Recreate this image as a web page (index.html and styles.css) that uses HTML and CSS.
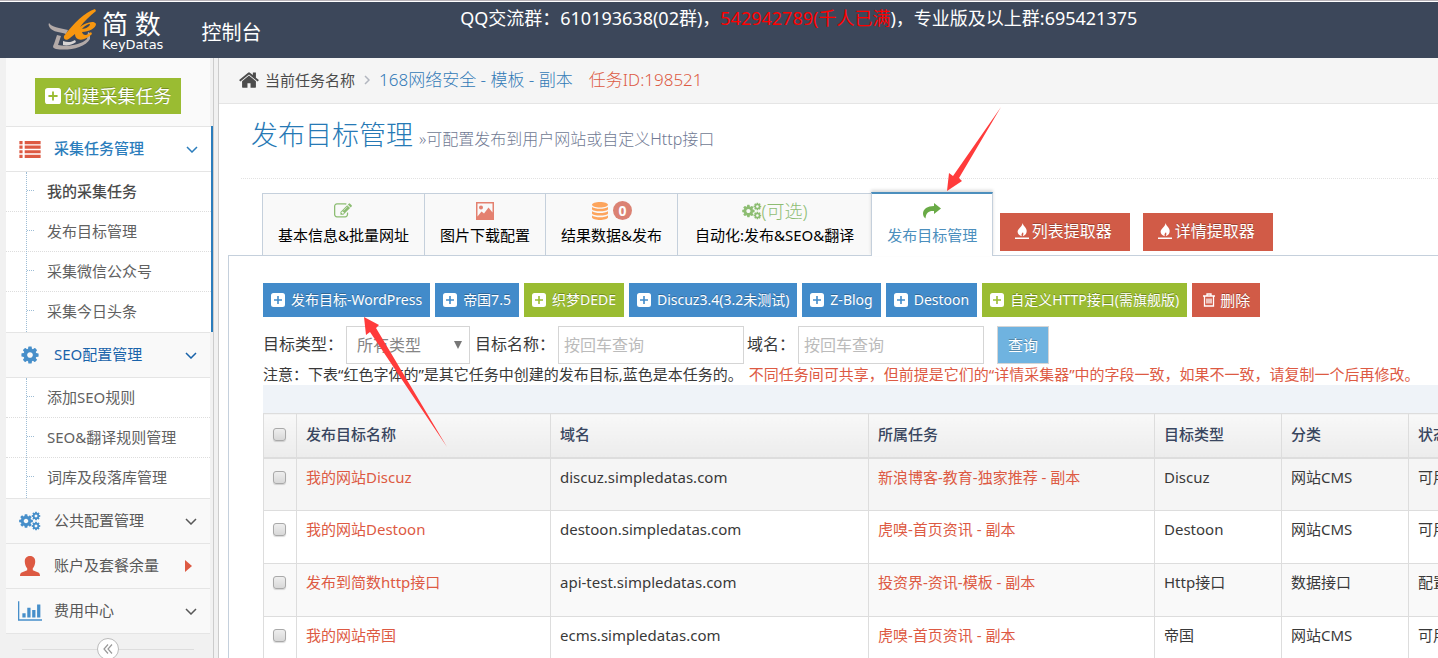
FILE: index.html
```html
<!DOCTYPE html>
<html lang="zh-CN">
<head>
<meta charset="utf-8">
<title>发布目标管理 - 简数控制台</title>
<link rel="stylesheet" href="styles.css">
</head>
<body>
<svg class="sprite" aria-hidden="true">
  <symbol id="cog" viewBox="0 0 1792 1792"><path d="M1152 896q0-106-75-181t-181-75-181 75-75 181 75 181 181 75 181-75 75-181zm512-109v222q0 12-8 23t-20 13l-185 28q-19 54-39 91 35 50 107 138 10 12 10 25t-9 23q-27 37-99 108t-94 71q-12 0-26-9l-138-108q-44 23-91 38-16 136-29 186-7 28-36 28h-222q-14 0-24.500-8.500t-11.500-21.500l-28-184q-49-16-90-37l-141 107q-10 9-25 9-14 0-25-11-126-114-165-168-7-10-7-23 0-12 8-23 15-21 51-66.500t54-70.500q-27-50-41-99l-183-27q-13-2-21-12.500t-8-23.500v-222q0-12 8-23t19-13l186-28q14-46 39-92-40-57-107-138-10-12-10-24 0-10 9-23 26-36 98.500-107.500t94.500-71.500q13 0 26 10l138 107q44-23 91-38 16-136 29-186 7-28 36-28h222q14 0 24.500 8.500t11.500 21.500l28 184q49 16 90 37l142-107q9-9 24-9 13 0 25 10 129 119 165 170 7 8 7 22 0 12-8 23-15 21-51 66.500t-54 70.500q26 50 41 98l183 28q13 2 21 12.500t8 23.500z"/></symbol>
  <symbol id="cogs" viewBox="0 0 22 20"><use href="#cog" x="-1" y="2" width="16" height="16"/><use href="#cog" x="12" y="0" width="10" height="10"/><use href="#cog" x="12" y="10" width="10" height="10"/></symbol>
  <symbol id="plus" viewBox="0 0 14 14"><path fill-rule="evenodd" d="M2.500 0h9A2.500 2.500 0 0 1 14 2.500v9a2.500 2.500 0 0 1-2.500 2.500h-9A2.500 2.500 0 0 1 0 11.500v-9A2.500 2.500 0 0 1 2.500 0zM6.200 3V6.200H3v1.600H6.200V11h1.600V7.800H11V6.200H7.800V3z"/></symbol>
  <symbol id="down" viewBox="0 0 12 7"><path d="M1 1l5 5 5-5" fill="none" stroke="currentColor" stroke-width="1.500"/></symbol>
  <symbol id="fire" viewBox="0 0 14 16"><path d="M7.500 0c.6 3 4.200 4.400 4.200 8 0 2.700-1.800 4.700-4 5.200.9-1.600.8-2.600.3-3.900-.6.900-1.400 1.300-1.500 2.300 0 .6.100 1.100.3 1.600C4.300 12.600 2.600 11 2.600 8.800 2.600 5.600 7.200 4.200 7.500 0z"/><path d="M0 14.500h14V16H0z"/></symbol>
</svg>

<div class="app">
  <header class="topbar">
    <a class="logo" href="#" aria-label="简数 KeyDatas">
      <svg class="logo-mark" viewBox="0 0 48 42" aria-hidden="true">
        <path d="M1 14c2 3 6 4 10 5l9 2-2 4c-6-2-13-2-16-6-1-2-2-3-1-5z" fill="#b3aaa8"/>
        <path d="M9 26l4 1-3 9c9 2 23 0 29-6l1-7 2 1v6c-5 9-22 12-34 10-4-1-3-3-2-5z" fill="#b3aaa8"/>
        <path d="M15 32c5 2 9 1 12-1l1 2c-4 3-9 4-13 3z" fill="#d8d4d4"/>
        <path d="M47 0C37 3 26 14 16 27c-1 4 3 5 6 2l5-4c0 7 9 8 17 0l-1-2c-4 4-8 4-9 0 7 0 14-4 14-8-2-4-11-1-16 3C36 12 42 7 48 2zM42 15c0 2-4 5-8 5 2-3 6-5 8-5z" fill="#f7960f"/>
      </svg>
      <span class="logo-text"><span class="logo-cn">简 数</span><span class="logo-en">KeyDatas</span></span>
    </a>
    <a class="console" href="#">控制台</a>
    <p class="notice">QQ交流群：610193638(02群)，<span class="full">542942789(千人已满</span>)，专业版及以上群:695421375</p>
  </header>

  <div class="body">
    <aside class="sidebar">
      <div class="create"><button type="button" class="btn-create"><svg><use href="#plus"/></svg>创建采集任务</button></div>
      <nav>
        <section class="open">
          <a class="item" href="#"><svg class="ico red" viewBox="0 0 20 16"><path d="M0 0h3v3H0zM5 0h15v3H5zM0 4.300h3v3H0zM5 4.300h15v3H5zM0 8.600h3v3H0zM5 8.600h15v3H5zM0 13h3v3H0zM5 13h15v3H5z"/></svg><span>采集任务管理</span><svg class="caret"><use href="#down"/></svg></a>
          <ul>
            <li><a class="current" href="#">我的采集任务</a></li>
            <li><a href="#">发布目标管理</a></li>
            <li><a href="#">采集微信公众号</a></li>
            <li><a href="#">采集今日头条</a></li>
          </ul>
        </section>
        <section>
          <a class="item link" href="#"><svg class="ico blue"><use href="#cog"/></svg><span>SEO配置管理</span><svg class="caret"><use href="#down"/></svg></a>
          <ul>
            <li><a href="#">添加SEO规则</a></li>
            <li><a href="#">SEO&amp;翻译规则管理</a></li>
            <li><a href="#">词库及段落库管理</a></li>
          </ul>
        </section>
        <section><a class="item" href="#"><svg class="ico blue"><use href="#cogs"/></svg><span>公共配置管理</span><svg class="caret"><use href="#down"/></svg></a></section>
        <section><a class="item" href="#"><svg class="ico red" viewBox="0 0 20 20"><path d="M10 0c3.500 0 5.500 2.500 5.200 6-.2 3-1.200 5-2.400 6.200v2l5.500 2.300C19.600 17 20 18.500 20 20H0c0-1.500.4-3 1.700-3.500l5.500-2.300v-2C6 11 5 9 4.800 6 4.500 2.500 6.500 0 10 0z"/></svg><span>账户及套餐余量</span><svg class="caret red" viewBox="0 0 12 12"><path d="M0 0v12l7-6z"/></svg></a></section>
        <section><a class="item" href="#"><svg class="ico blue" viewBox="0 0 22 18"><path d="M0 0h1.200v16.500H22V18H0zM4 11h3v4H4zM8.500 6h3v9h-3zM13 8h3v7h-3zM17.500 3h3v12h-3z"/></svg><span>费用中心</span><svg class="caret"><use href="#down"/></svg></a></section>
      </nav>
      <div class="collapse"><button type="button" aria-label="收起菜单"><svg viewBox="0 0 10 10"><path d="M5 .5L1 5l4 4.500M9 .5L5 5l4 4.500" fill="none" stroke="#999" stroke-width="1.200"/></svg></button></div>
    </aside>

    <main class="main">
      <div class="crumbs">
        <svg class="home" viewBox="64 160 1664 1376"><path d="M1472 992v480q0 26-19 45t-45 19h-384v-384h-256v384h-384q-26 0-45-19t-19-45v-480q0-1 .5-3t.5-3l575-474 575 474q1 2 1 6zm223-69l-62 74q-8 9-21 11h-3q-13 0-21-7l-692-577-692 577q-12 8-24 7-13-2-21-11l-62-74q-8-10-7-23.500t11-21.500l719-599q32-26 76-26t76 26l244 204v-195q0-14 9-23t23-9h192q14 0 23 9t9 23v408l219 182q10 8 11 21.500t-7 23.500z"/></svg>
        <span>当前任务名称</span>
        <svg class="sep" viewBox="0 0 6 10"><path d="M1 1l4 4-4 4" fill="none" stroke="#b2b6bf" stroke-width="1.500"/></svg>
        <a class="task" href="#">168网络安全 - 模板 - 副本</a>
        <span class="task-id">任务ID:198521</span>
      </div>

      <div class="heading"><h1>发布目标管理</h1><small>»可配置发布到用户网站或自定义Http接口</small></div>

      <div class="tabs">
        <a class="tab" href="#"><span class="tab-icon"><svg class="green-ico" viewBox="0 128 1792 1536"><path d="M888 1184l116-116-152-152-116 116v56h96v96h56zm440-720q-16-16-33 1l-350 350q-17 17-1 33t33-1l350-350q17-17 1-33zm80 594v190q0 119-84.500 203.500t-203.500 84.500h-832q-119 0-203.500-84.500t-84.500-203.500v-832q0-119 84.500-203.500t203.500-84.500h832q63 0 117 25 15 7 18 23 3 17-9 29l-49 49q-14 14-32 8-23-6-45-6h-832q-66 0-113 47t-47 113v832q0 66 47 113t113 47h832q66 0 113-47t47-113v-126q0-13 9-22l64-64q15-15 35-7t20 29zm-96-738l288 288-672 672h-288v-288zm444 132l-92 92-288-288 92-92q28-28 68-28t68 28l152 152q28 28 28 68t-28 68z"/></svg></span>基本信息&amp;批量网址</a>
        <a class="tab" href="#"><span class="tab-icon"><svg class="red" viewBox="0 0 18 18"><path fill-rule="evenodd" d="M0 0h18v18H0zM1.500 1.500v13l4-5 2.500 2 4.500-6 4 5v-9zM5 3.500a2 2 0 1 1 0 4 2 2 0 0 1 0-4z"/></svg></span>图片下载配置</a>
        <a class="tab" href="#"><span class="tab-icon"><svg class="orange" viewBox="0 0 16 18"><path d="M8 0c4.400 0 8 1.200 8 2.700S12.400 5.400 8 5.400 0 4.200 0 2.700 3.600 0 8 0zM0 5c3 2.400 13 2.400 16 0v2.200C15 10 1 10 0 7.200zM0 9.300c3 2.400 13 2.400 16 0v2.200c-1 2.800-15 2.800-16 0zM0 13.500c3 2.400 13 2.400 16 0v2C15 18.800 1 18.800 0 15.500z"/></svg><b class="badge">0</b></span>结果数据&amp;发布</a>
        <a class="tab wide" href="#"><span class="tab-icon optional"><svg><use href="#cogs"/></svg>(可选)</span>自动化:发布&amp;SEO&amp;翻译</a>
        <a class="tab active" href="#"><span class="tab-icon"><svg class="green-ico" viewBox="0 0 18 16"><path d="M11 0l7 5.500-7 5.500V8C6 7.500 3 9.500 2.500 15.500 1 14.500 0 12.500 0 10.500 0 6 4.500 3 11 3z"/></svg></span>发布目标管理</a>
        <button type="button" class="extract"><svg><use href="#fire"/></svg>列表提取器</button>
        <button type="button" class="extract"><svg><use href="#fire"/></svg>详情提取器</button>
      </div>

      <div class="panel">
        <div class="toolbar">
          <button type="button"><svg><use href="#plus"/></svg>发布目标-WordPress</button>
          <button type="button"><svg><use href="#plus"/></svg>帝国7.5</button>
          <button type="button" class="green"><svg><use href="#plus"/></svg>织梦DEDE</button>
          <button type="button"><svg><use href="#plus"/></svg>Discuz3.4(3.2未测试)</button>
          <button type="button"><svg><use href="#plus"/></svg>Z-Blog</button>
          <button type="button"><svg><use href="#plus"/></svg>Destoon</button>
          <button type="button" class="green"><svg><use href="#plus"/></svg>自定义HTTP接口(需旗舰版)</button>
          <button type="button" class="danger"><svg viewBox="0 0 12 14"><path d="M0 3h12M4 3V1h4v2M1.500 3v10h9V3M4 5.500v5M6 5.500v5M8 5.500v5" fill="none" stroke="#fff" stroke-width="1.300"/></svg>删除</button>
        </div>

        <form class="filters">
          <label for="type">目标类型：</label>
          <span class="select"><select id="type"><option>所有类型</option></select></span>
          <label for="name">目标名称：</label>
          <input id="name" type="text" placeholder="按回车查询">
          <label for="domain">域名：</label>
          <input id="domain" type="text" placeholder="按回车查询">
          <button type="button" class="query">查询</button>
        </form>
        <p class="note">注意：下表“红色字体的”是其它任务中创建的发布目标,蓝色是本任务的。<span>不同任务间可共享，但前提是它们的“详情采集器”中的字段一致，如果不一致，请复制一个后再修改。</span></p>

        <div class="grid">
          <table>
            <colgroup><col class="c-check"><col class="c-name"><col class="c-domain"><col class="c-task"><col class="c-kind"><col class="c-kind"><col class="c-kind"></colgroup>
            <thead><tr><th><input type="checkbox" aria-label="全选"></th><th>发布目标名称</th><th>域名</th><th>所属任务</th><th>目标类型</th><th>分类</th><th>状态</th></tr></thead>
            <tbody>
              <tr class="hover"><td><input type="checkbox" aria-label="选择 我的网站Discuz"></td><td><a href="#">我的网站Discuz</a></td><td>discuz.simpledatas.com</td><td><a href="#">新浪博客-教育-独家推荐 - 副本</a></td><td>Discuz</td><td>网站CMS</td><td>可用</td></tr>
              <tr><td><input type="checkbox" aria-label="选择 我的网站Destoon"></td><td><a href="#">我的网站Destoon</a></td><td>destoon.simpledatas.com</td><td><a href="#">虎嗅-首页资讯 - 副本</a></td><td>Destoon</td><td>网站CMS</td><td>可用</td></tr>
              <tr class="odd"><td><input type="checkbox" aria-label="选择 发布到简数http接口"></td><td><a href="#">发布到简数http接口</a></td><td>api-test.simpledatas.com</td><td><a href="#">投资界-资讯-模板 - 副本</a></td><td>Http接口</td><td>数据接口</td><td>配置</td></tr>
              <tr><td><input type="checkbox" aria-label="选择 我的网站帝国"></td><td><a href="#">我的网站帝国</a></td><td>ecms.simpledatas.com</td><td><a href="#">虎嗅-首页资讯 - 副本</a></td><td>帝国</td><td>网站CMS</td><td>可用</td></tr>
            </tbody>
          </table>
        </div>
      </div>
    </main>
  </div>

  <svg class="pointer pointer-tab" viewBox="0 0 56 87" aria-hidden="true"><path d="M55 2L13 73l3 3L1 86l2-18 4 3z"/></svg>
  <svg class="pointer pointer-add" viewBox="0 0 84 133" aria-hidden="true"><path d="M0 2l15 8-3 3 71 119L6 17l-4 3z"/></svg>
</div>
</body>
</html>
```
FILE: styles.css
```css
* { box-sizing: border-box; }

body {
  margin: 0;
  font: 15px/22px "Noto Sans", "Noto Sans CJK SC", sans-serif;
  color: #393939;
  background: #fff;
}

a { color: inherit; text-decoration: none; }
button, input, select { font: inherit; margin: 0; border-radius: 0; }
svg { fill: currentColor; flex: none; }
ul { list-style: none; margin: 0; padding: 0; }
.sprite { position: absolute; width: 0; height: 0; }

.app {
  position: relative;
  display: flex;
  flex-direction: column;
  height: 100vh;
  overflow: hidden;
  border-top: 1px solid #b8b3b8;
}

/* Top bar */
.topbar {
  position: relative;
  flex: none;
  display: flex;
  align-items: center;
  height: 57px;
  padding-left: 48px;
  color: #fff;
  background: #3c475a;
  border-top: 1px solid #fff;
}
.logo { display: flex; align-items: center; gap: 6px; }
.logo-mark { width: 48px; height: 42px; }
.logo-text { display: flex; flex-direction: column; }
.logo-cn { font-size: 26px; line-height: 28px; }
.logo-en { font: 13px/13px "DejaVu Sans", sans-serif; }
.console { margin-left: 38px; padding-top: 6px; font-size: 20px; }
.notice {
  position: absolute;
  left: 32%;
  top: 3px;
  margin: 0;
  font-size: 18px;
  line-height: 26px;
  white-space: nowrap;
}
.notice .full { color: #f00; }

.body { flex: 1; display: flex; min-height: 0; }

/* Sidebar */
.sidebar {
  flex: none;
  width: 219px;
  padding-left: 6px;
  background: linear-gradient(90deg, #f1f1f1 213px, #ccc 213px, #ccc 214px, #f1f1f1 214px, #f1f1f1 218px, #ccc 218px);
}
.create {
  display: flex;
  justify-content: center;
  width: 204px;
  height: 68px;
  padding-top: 20px;
  background: #fafafa;
}
.btn-create {
  display: flex;
  align-items: center;
  justify-content: center;
  gap: 3px;
  width: 146px;
  height: 36px;
  padding: 0;
  border: 0;
  color: #fff;
  background: #9abc32;
  font-size: 18px;
  text-shadow: 0 -1px 0 rgba(0, 0, 0, .25);
}
.btn-create svg { width: 16px; height: 16px; }
.sidebar section { width: 204px; }
.sidebar section.open { width: 207px; border-right: 2px solid #2b7dbc; }
.item {
  display: flex;
  align-items: center;
  height: 45px;
  padding: 0 13px 0 12px;
  border-top: 1px solid #e5e5e5;
  background: #f9f9f9;
  color: #585858;
}
.item span { flex: 1; padding: 0 0 2px 12px; }
.item.link { color: #1963aa; }
.open .item { color: #2b7dbc; background: #fff; font-weight: 500; }
.ico { width: 24px; height: 20px; }
.open .ico { height: 17px; }
.red { color: #dd5a43; }
.blue { color: #478fca; }
.orange { color: #ff892a; }
.green-ico { color: #69aa46; }
.caret { width: 12px; height: 7px; }
.caret.red { height: 12px; }
.sidebar ul { position: relative; border-top: 1px solid #e5e5e5; background: #fff; }
.sidebar ul::before {
  content: "";
  position: absolute;
  left: 20px;
  top: 0;
  bottom: 0;
  border-left: 1px dotted #9dbdd6;
}
.sidebar li { height: 40px; border-bottom: 1px dotted #ddd; }
.sidebar li:last-child { border-bottom: 0; }
.sidebar li a { display: flex; align-items: center; gap: 13px; height: 37px; padding-left: 21px; color: #616161; }
.sidebar li a::before { content: ""; width: 7px; border-top: 1px dotted #9dbdd6; }
.sidebar li .current { font-weight: 500; color: #4b4b4b; }
.collapse {
  display: flex;
  justify-content: center;
  width: 204px;
  padding-top: 4px;
  border-top: 1px solid #e5e5e5;
  background: linear-gradient(#ddd, #ddd) 50% 15px / 172px 1px no-repeat;
}
.collapse button {
  display: grid;
  place-items: center;
  width: 22px;
  height: 22px;
  padding: 0;
  border: 1px solid #bbb;
  border-radius: 50%;
  background: #fff;
}
.collapse svg { width: 10px; height: 10px; }

/* Main column */
.main { flex: 1; min-width: 0; overflow: hidden; }
.crumbs {
  display: flex;
  align-items: center;
  height: 46px;
  padding: 0 0 2px 20px;
  border-bottom: 1px solid #e5e5e5;
  background: #f5f5f5;
  color: #4c4c4c;
  white-space: nowrap;
}
.home { width: 20px; height: 17px; margin-right: 6px; }
.sep { width: 6px; height: 10px; margin: 0 9px; }
.task, .task-id { font-size: 17px; font-weight: 300; }
.task { color: #337ab7; }
.task-id { margin-left: 16px; color: #dd5a43; }

.heading {
  display: flex;
  align-items: baseline;
  gap: 6px;
  height: 75px;
  margin-left: 22px;
  padding: 12px 0 0 10px;
  border-bottom: 1px dotted #e2e2e2;
  white-space: nowrap;
}
.heading h1 { margin: 0; font-size: 27px; line-height: 38px; font-weight: 300; color: #2679b5; }
.heading small { font-size: 16px; font-weight: 300; color: #6f7993; }

/* Tabs */
.tabs { display: flex; align-items: flex-end; padding: 13px 0 0 43px; white-space: nowrap; }
.tab {
  height: 62px;
  padding: 5px 15px 0;
  border: 1px solid #c5d0dc;
  border-width: 1px 0 0 1px;
  background: #f9f9f9;
  color: #000;
  text-align: center;
}
.tab.wide { padding: 5px 17px 0; }
.tab-icon { display: flex; align-items: center; justify-content: center; gap: 4px; height: 25px; padding-bottom: 2px; opacity: .75; }
.tab-icon svg { width: 18px; height: 18px; }
.tab-icon.optional { gap: 0; font-size: 18px; font-weight: 300; color: #69aa46; }
.optional svg { width: 20px; }
.badge { width: 19px; height: 19px; border-radius: 50%; background: #d15b47; color: #fff; font-size: 14px; line-height: 19px; }
.tab.active {
  position: relative;
  height: 64px;
  margin-bottom: -1px;
  border-width: 2px 1px 0;
  border-top-color: #4c8fbd;
  background: #fff;
  color: #4c8fbd;
  box-shadow: 0 -2px 3px rgba(0, 0, 0, .15);
}
.active .tab-icon { opacity: 1; }
.extract {
  display: flex;
  align-items: center;
  justify-content: center;
  gap: 3px;
  width: 130px;
  height: 38px;
  margin: 0 6px 4px 7px;
  padding: 0 4px 2px 0;
  border: 0;
  background: #d15b47;
  color: #fff;
  font-size: 16px;
  text-shadow: 0 -1px 0 rgba(0, 0, 0, .25);
}
.extract svg { width: 14px; height: 16px; }

/* Panel */
.panel {
  margin-left: 9px;
  padding: 27px 0 0 34px;
  border: 1px solid #c5d0dc;
  border-width: 1px 0 0 1px;
  white-space: nowrap;
}
.toolbar { display: flex; gap: 5px; }
.toolbar button {
  display: flex;
  align-items: center;
  gap: 6px;
  height: 34px;
  padding: 0 8px;
  border: 0;
  background: #428bca;
  color: #fff;
  font-size: 14px;
  text-shadow: 0 -1px 0 rgba(0, 0, 0, .25);
}
.toolbar .green { background: #9abc32; }
.toolbar .danger { gap: 4px; padding: 0 10px; background: #d15b47; font-size: 15px; }
.toolbar svg { width: 14px; height: 14px; }

.filters { display: flex; align-items: center; gap: 3px; padding-top: 9px; font-size: 16px; }
.filters label { padding-bottom: 2px; }
.select { position: relative; width: 124px; margin-right: 2px; }
.select::after {
  content: "";
  position: absolute;
  right: 8px;
  top: 15px;
  border: 4px solid transparent;
  border-top: 8px solid #777;
  border-bottom: 0;
}
.select select { width: 100%; height: 38px; padding: 0 10px; border: 1px solid #d5d5d5; appearance: none; background: #fff; color: #858585; }
.filters input { width: 186px; height: 38px; padding: 0 5px; border: 1px solid #d5d5d5; color: #858585; }
.filters input::placeholder { color: #bbb; }
.query { width: 52px; height: 38px; margin-left: 10px; padding: 0; border: 1px solid #d5d5d5; background: #6fb3e0; color: #fff; font-size: 15px; text-shadow: 0 -1px 0 rgba(0, 0, 0, .25); }
.note { margin: 0; line-height: 21px; }
.note span { margin-left: 6px; color: #dd5a43; }

/* Data table */
.grid { padding-top: 28px; background: #eff3f8; overflow: hidden; }
table { width: 1273px; table-layout: fixed; border-collapse: collapse; background: #fff; }
.c-check { width: 33px; }
.c-name { width: 254px; }
.c-domain { width: 318px; }
.c-task { width: 286px; }
.c-kind { width: 127px; }
th, td { border: 1px solid #ddd; padding: 7px 9px; text-align: left; vertical-align: top; }
th { height: 44px; padding-top: 9px; border-bottom: 2px solid #ddd; font-weight: 500; color: #394660; background: linear-gradient(#f8f8f8, #ececec); }
td { height: 53px; }
td a { color: #dd5a43; }
.hover td { background: #f5f5f5; }
.odd td { background: #f9f9f9; }
table input {
  display: block;
  width: 13px;
  height: 13px;
  margin: 5px 0 0;
  appearance: none;
  border: 1px solid #a9a9a9;
  border-radius: 3px;
  background: linear-gradient(#eee, #d8d8d8);
  box-shadow: 0 1px 1px rgba(0, 0, 0, .15);
}

/* Annotation arrows laid over the page */
.pointer { position: absolute; color: #ff3b3b; pointer-events: none; }
.pointer-tab { left: 946px; top: 104px; width: 56px; height: 87px; }
.pointer-add { left: 364px; top: 314px; width: 84px; height: 133px; }
```
